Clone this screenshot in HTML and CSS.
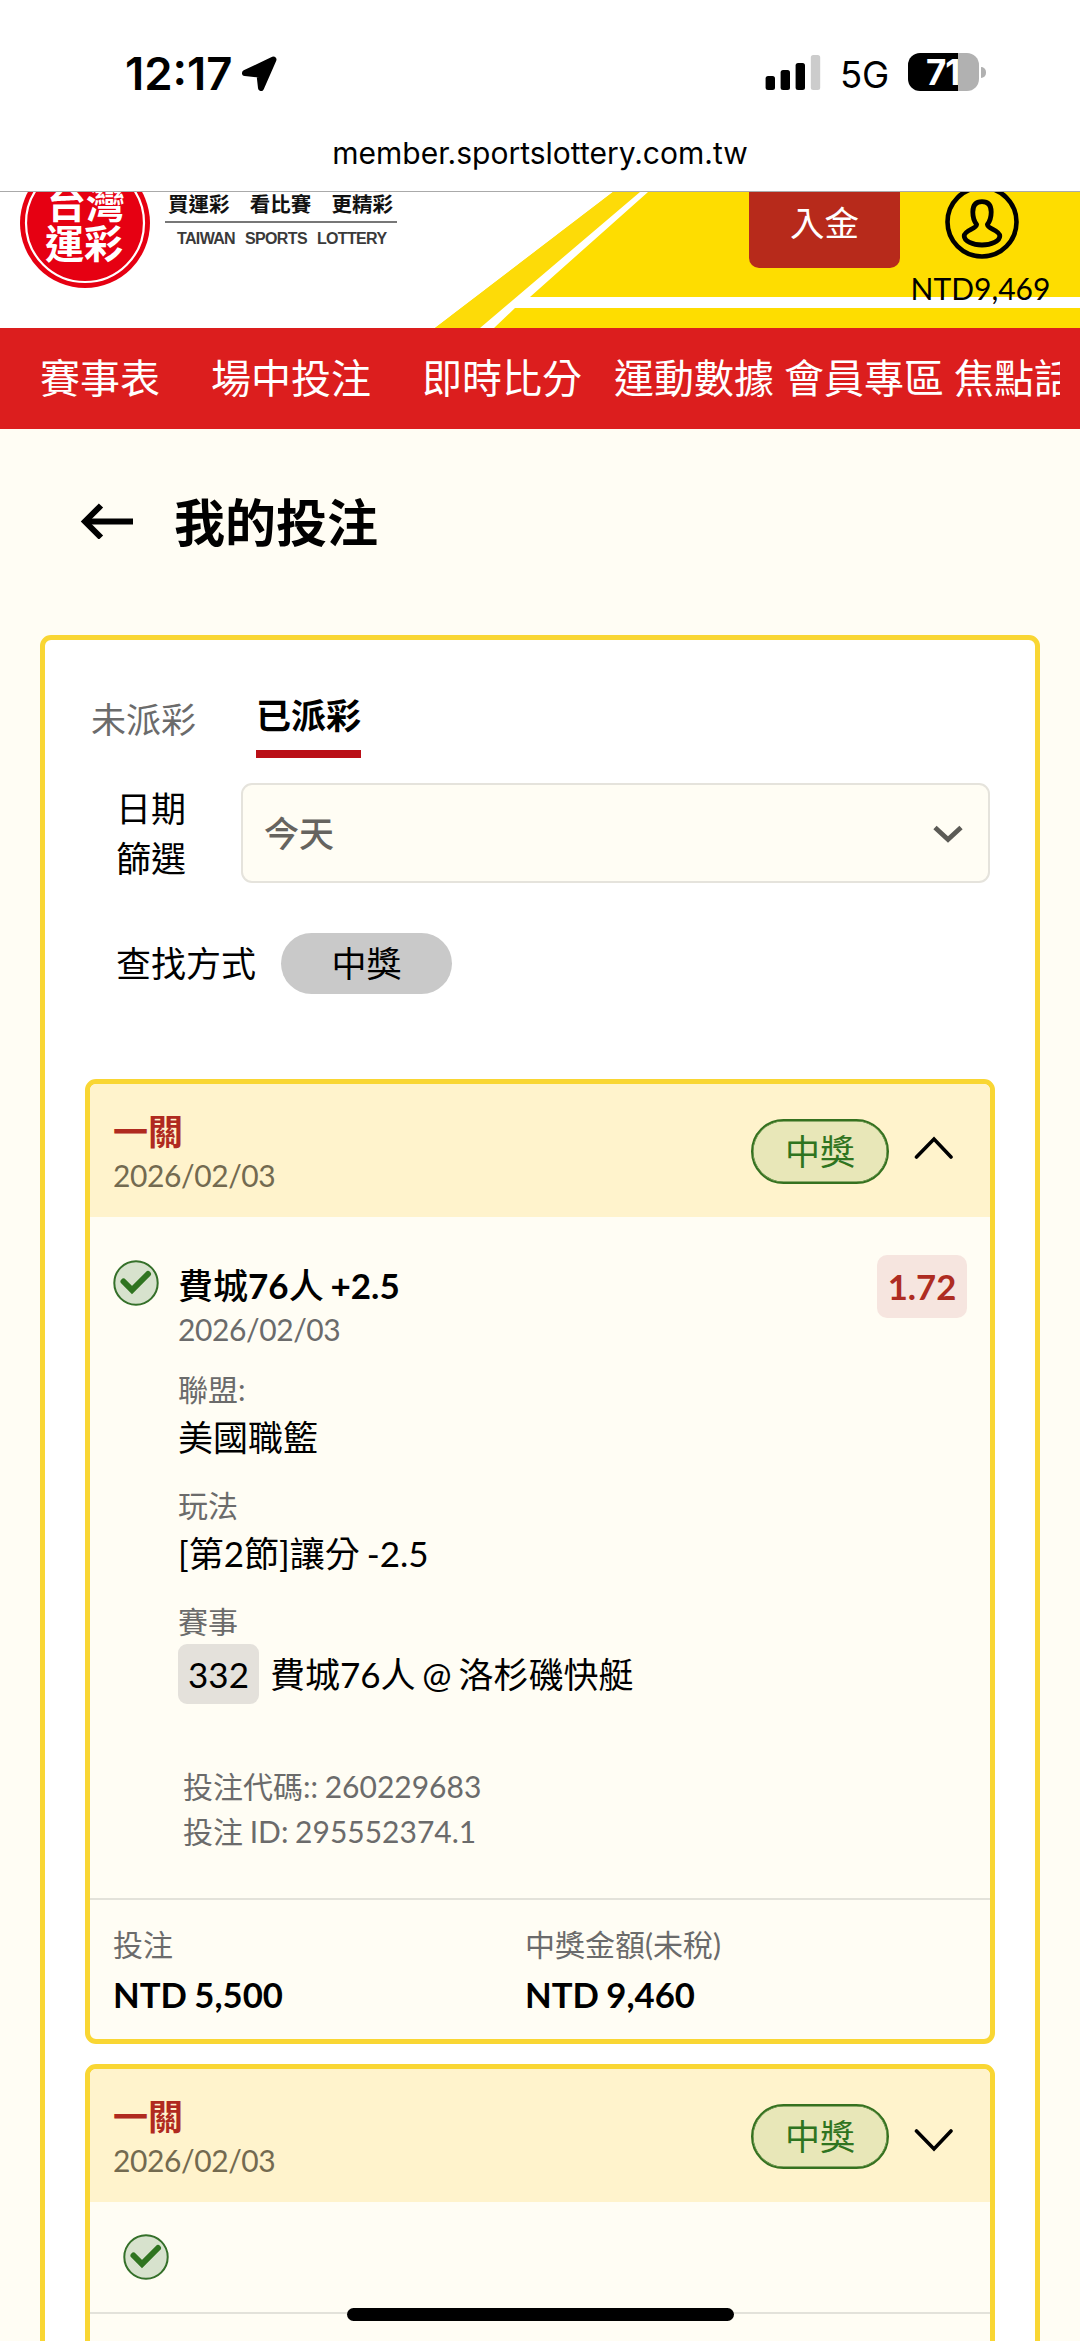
FILE: index.html
```html
<!DOCTYPE html>
<html lang="zh-Hant">
<head>
<meta charset="utf-8">
<title>我的投注</title>
<link rel="stylesheet" href="styles.css">
</head>
<body>
<div class="screen">
  <div class="status">
    <div class="status-left">
      <span class="clock">12:17</span>
      <svg class="loc" width="37" height="36" viewBox="0 0 37 36"><path d="M32.500 3.500 20 32 18.500 18.500 4 17Z" fill="#000" stroke="#000" stroke-width="6" stroke-linejoin="round"/></svg>
    </div>
    <div class="status-right">
      <svg class="signal" width="56" height="36" viewBox="0 0 56 36"><rect x="0.600" y="21" width="9.400" height="14" rx="2.500"/><rect x="15.600" y="15" width="9.400" height="20" rx="2.500"/><rect x="30.600" y="8" width="9.400" height="27" rx="2.500"/><rect x="45.800" y="0" width="9.400" height="35" rx="2.500" fill="#ccc"/></svg>
      <span class="net">5G</span>
      <div class="battery"><span class="battery-level">71</span></div>
      <span class="battery-tip"></span>
    </div>
  </div>
  <div class="url">member.sportslottery.com.tw</div>

  <header class="site-header">
    <svg class="header-bg" width="1080" height="136" viewBox="0 0 1080 136">
      <path d="M613 0H1080V136H435Z" fill="#fedd00"/>
      <path d="M613 0H641L481 136H435Z" fill="#fddb08"/>
      <path d="M640 0H648L530 105H1080V116H515L494 136H480Z" fill="#fff"/>
    </svg>
    <div class="header-row">
      <svg class="logo" width="131" height="96" viewBox="20 0 131 96">
        <circle cx="85" cy="31" r="65" fill="#e60012"/>
        <circle cx="85" cy="31" r="59" fill="none" stroke="#fff" stroke-width="2.200"/>
        <text class="logo-text" x="47" y="26">台灣</text>
        <text class="logo-text" x="45" y="66">運彩</text>
      </svg>
      <div class="slogan">
        <div class="slogan-zh"><span>買運彩</span><span>看比賽</span><span>更精彩</span></div>
        <div class="slogan-en"><span>TAIWAN</span><span>SPORTS</span><span>LOTTERY</span></div>
      </div>
      <a class="deposit">入金</a>
      <div class="account">
        <svg width="76" height="68" viewBox="0 0 76 68" fill="none" stroke="#000">
          <circle cx="38" cy="30" r="34.500" stroke-width="4.600"/>
          <path d="M38 9.700c-6.300 0-9.200 4-9.200 10.300 0 6 1.500 9.500 3.800 12.500 0 4.500-12.400 5.500-12.400 11.500 0 5 8.500 9 17.800 9s17.800-4 17.800-9c0-6-12.400-7-12.400-11.500 2.300-3 3.800-6.500 3.800-12.500 0-6.300-2.900-10.300-9.200-10.300Z" stroke-width="4.800" stroke-linejoin="round"/>
        </svg>
        <span class="balance">NTD9,469</span>
      </div>
    </div>
  </header>

  <nav class="nav">
    <a class="nav-item">賽事表</a><a class="nav-item">場中投注</a><a class="nav-item">即時比分</a><a class="nav-item tight">運動數據</a><a class="nav-item tight">會員專區</a><a class="nav-item">焦點話題</a>
  </nav>

  <div class="page-title">
    <svg width="54" height="36" viewBox="0 0 54 36" fill="none" stroke="#000" stroke-width="6"><path d="M53 18.500H6"/><path d="M21 2.500 5 18.500 21 34.500"/></svg>
    <h1>我的投注</h1>
  </div>

  <main class="panel">
    <div class="tabs"><a class="tab">未派彩</a><a class="tab active">已派彩</a></div>
    <div class="date-row">
      <div class="date-label">日期<br>篩選</div>
      <div class="select"><span>今天</span>
        <svg width="30" height="18" viewBox="0 0 30 18" fill="none" stroke="#5c5b56" stroke-width="4.800"><path d="M2 2.500 15 14.500 28 2.500"/></svg>
      </div>
    </div>
    <div class="filter-row"><span>查找方式</span><span class="pill">中獎</span></div>

    <section class="bet">
      <div class="bet-head">
        <div><div class="bet-type">一關</div><div class="bet-date">2026/02/03</div></div>
        <span class="badge">中獎</span>
        <svg class="chev up" width="40" height="24" viewBox="0 0 40 24" fill="none" stroke="#000" stroke-width="3.600" stroke-linecap="round"><path d="M2.500 21 20 3 37 21"/></svg>
      </div>
      <div class="leg">
        <svg class="check" width="46" height="46" viewBox="0 0 46 46"><circle cx="23" cy="23" r="21.700" fill="#d7e2cd" stroke="#35702a" stroke-width="2"/><path d="M10.500 21.500 19 30 35 14" fill="none" stroke="#2f7420" stroke-width="6" stroke-linecap="round"/></svg>
        <div class="leg-body">
          <div class="pick">費城<b>76</b>人 <b>+2.5</b></div>
          <div class="bet-date">2026/02/03</div>
          <div class="label">聯盟:</div><div class="value">美國職籃</div>
          <div class="label">玩法</div><div class="value">[第2節]讓分 -2.5</div>
          <div class="label">賽事</div>
          <div class="match"><span class="match-no">332</span><span>費城76人 @ 洛杉磯快艇</span></div>
          <div class="ids">投注代碼:: 260229683<br>投注 ID: 295552374.1</div>
        </div>
        <span class="odds">1.72</span>
      </div>
      <div class="totals">
        <div><div class="label">投注</div><div class="amount">NTD 5,500</div></div>
        <div><div class="label">中獎金額(未稅)</div><div class="amount">NTD 9,460</div></div>
      </div>
    </section>

    <section class="bet">
      <div class="bet-head">
        <div><div class="bet-type">一關</div><div class="bet-date">2026/02/03</div></div>
        <span class="badge">中獎</span>
        <svg class="chev down" width="40" height="24" viewBox="0 0 40 24" fill="none" stroke="#000" stroke-width="3.600" stroke-linecap="round"><path d="M2.500 3 20 21 37 3"/></svg>
      </div>
      <div class="leg-collapsed">
        <svg class="check" width="46" height="46" viewBox="0 0 46 46"><circle cx="23" cy="23" r="21.700" fill="#d7e2cd" stroke="#35702a" stroke-width="2"/><path d="M10.500 21.500 19 30 35 14" fill="none" stroke="#2f7420" stroke-width="6" stroke-linecap="round"/></svg>
      </div>
      <div class="totals"></div>
    </section>
  </main>
  <div class="home-bar"></div>
</div>
</body>
</html>
```
FILE: styles.css
```css
* { box-sizing: border-box; }
body { margin: 0; background: #fffdf4; color: #000; font-family: Lato, "Noto Sans CJK TC", sans-serif; }
svg { display: block; flex: none; }
.screen { position: relative; width: 1080px; height: 2341px; overflow: hidden; background: #fffdf4; display: flex; flex-direction: column; }

.status { flex: none; height: 127px; background: #fff; display: flex; justify-content: space-between; padding: 0 94px 0 125px; font-family: Inter, sans-serif; }
.status-left, .status-right { display: flex; align-items: flex-start; }
.clock { margin-top: 48px; font-size: 45.500px; line-height: 52px; font-weight: 600; width: 108px; white-space: nowrap; }
.loc { margin: 56px 0 0 8px; }
.signal { margin: 55px 19px 0 0; }
.net { margin-top: 54px; font-size: 36.500px; line-height: 43px; width: 68px; letter-spacing: -.3px; }
.battery { margin-top: 53px; width: 71px; height: 38px; border-radius: 12px; background: linear-gradient(90deg, #000 50px, #b1b1b1 50px); color: #fff; }
.battery-level { display: block; width: 50px; overflow: hidden; padding-left: 18px; white-space: nowrap; font-size: 35px; line-height: 38px; font-weight: 700; letter-spacing: -1px; }
.battery-tip { margin: 67px 0 0 2px; width: 5px; height: 11px; border-radius: 0 5px 5px 0; background: #b1b1b1; }
.url { flex: none; height: 65px; background: #fff; border-bottom: 1px solid #aaa; text-align: center; font: 400 30px/53px Inter, sans-serif; }

.site-header { flex: none; height: 136px; position: relative; background: #fff; overflow: hidden; }
.header-bg { position: absolute; left: 0; top: 0; }
.header-row { position: relative; display: flex; align-items: flex-start; padding-left: 20px; }
.logo-text { font: 700 39px "Noto Sans CJK TC", sans-serif; fill: #fff; }
.slogan { margin-left: 14px; width: 232px; flex: none; }
.slogan-zh { display: flex; justify-content: space-between; padding: 0 4px 0 3px; height: 31px; border-bottom: 2px solid #777; font-size: 20.500px; line-height: 25px; font-weight: 700; color: #111; }
.slogan-en { display: flex; gap: 10px; padding-left: 12px; margin-top: 5px; font: 700 16px/22px "Liberation Sans", sans-serif; letter-spacing: -.65px; color: #3a3a3a; }
.deposit { margin-left: 352px; width: 151px; height: 76px; flex: none; background: #b72a1b; border-radius: 0 0 10px 10px; color: #fff; font-size: 34.500px; line-height: 61px; text-align: center; }
.account { width: 161px; display: flex; flex-direction: column; align-items: center; }
.account svg { margin-left: 2px; }
.balance { font-size: 30px; line-height: 36px; margin-top: 10px; white-space: nowrap; }

.nav { flex: none; height: 101px; background: #dc1e1e; color: #fff; display: flex; padding-left: 40px; overflow: hidden; font-size: 40px; line-height: 101px; white-space: nowrap; border-right: 20px solid #dc1e1e; }
.nav-item { flex: none; margin-right: 51px; }
.nav-item:nth-child(3) { margin-right: 32px; }
.nav-item.tight { margin-right: 10px; }

.page-title { flex: none; height: 206px; display: flex; padding-left: 80px; }
.page-title svg { margin-top: 74px; }
.page-title h1 { margin: 59px 0 0 40px; font-size: 51px; line-height: 70px; font-weight: 700; }

.panel { flex: none; margin: 0 40px; height: 1760px; background: #fff; border: 5px solid #f9d633; border-radius: 11px; padding: 0 40px; }
.tabs { display: flex; height: 143px; padding: 0 6px; font-size: 35px; color: #6b6b6b; }
.tab { height: 60px; margin-top: 49px; line-height: 60px; }
.tab.active { margin: 45px 0 0 60px; height: 73px; border-bottom: 8px solid #ba0f17; color: #000; font-weight: 700; }
.date-row { display: flex; font-size: 35px; }
.date-label { width: 125px; padding-left: 31px; line-height: 50px; }
.select { margin-left: 31px; width: 749px; height: 100px; border: 2px solid #e5e3dc; border-radius: 11px; background: #fffdf4; display: flex; align-items: center; justify-content: space-between; padding: 0 25px 4px 21px; color: #66645f; font-weight: 500; }
.select svg { margin-top: 5px; }
.filter-row { margin-top: 50px; padding-left: 31px; height: 146px; display: flex; font-size: 35px; line-height: 61px; }
.pill { margin-left: 25px; width: 171px; height: 61px; border-radius: 31px; background: #c9c9c9; text-align: center; }

.bet { border: 5px solid #f9d633; border-radius: 11px; background: #fffdf4; margin-bottom: 20px; overflow: hidden; }
.bet-head { height: 133px; background: #fff3cc; display: flex; padding: 20px 36px 0 23px; }
.bet-type { font-size: 35px; line-height: 54px; font-weight: 700; color: #b02a1f; }
.bet-date { font-size: 30px; line-height: 35px; letter-spacing: -.4px; color: #6b6b6b; }
.bet-head .bet-date { color: #736a50; }
.badge { margin: 15px 0 0 auto; width: 138px; height: 65px; border: 2px solid #35711f; border-radius: 33px; background: #e8e7b8; color: #2f7420; font-size: 35px; line-height: 60px; text-align: center; box-shadow: inset 0 0 0 .5px #35711f; }
.chev { margin-left: 25px; }
.chev.up { margin-top: 32px; }
.chev.down { margin-top: 39px; }
.leg { height: 681px; display: flex; padding: 0 23px; }
.check { margin-top: 43px; }
.leg-body { flex: 1; margin-left: 19px; }
.pick { margin-top: 43px; font-size: 35px; line-height: 50px; font-weight: 500; word-spacing: -2px; }
.pick b { font-weight: 700; }
.leg-body .bet-date { line-height: 38px; }
.label { font-size: 30px; line-height: 42px; color: #6b6b6b; }
.leg-body .label { padding-top: 20px; height: 62px; }
.value { font-size: 35px; line-height: 55px; margin-bottom: -1px; word-spacing: -2px; }
.match { display: flex; margin-top: 2px; font-size: 35px; line-height: 60px; white-space: nowrap; word-spacing: -2.200px; }
.match-no { width: 81px; height: 60px; margin-right: 11px; border-radius: 9px; background: #e4e1db; text-align: center; }
.ids { margin-top: 60px; padding-left: 5px; font-size: 30px; line-height: 45px; color: #6b6b6b; word-spacing: -1px; }
.odds { margin-top: 38px; width: 90px; height: 63px; border-radius: 10px; background: #f6e5df; color: #ae2c22; font-size: 34.700px; line-height: 63px; font-weight: 700; text-align: center; }
.totals { border-top: 2px solid #e3e2da; height: 141px; padding: 23px 23px 0; display: grid; grid-template-columns: 412px 1fr; }
.amount { font-size: 34.700px; line-height: 60px; font-weight: 700; word-spacing: -1px; }
.leg-collapsed { height: 110px; padding-left: 33px; display: flex; }
.leg-collapsed .check { margin-top: 32px; }

.home-bar { position: absolute; left: 347px; top: 2308px; width: 387px; height: 13px; border-radius: 7px; background: #000; }
```
